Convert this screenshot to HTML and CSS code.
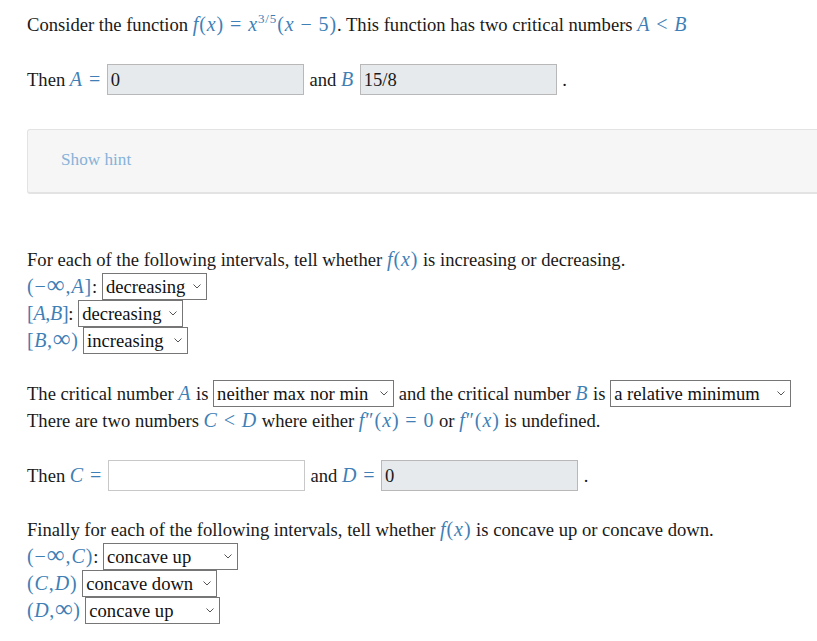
FILE: index.html
```html
<!DOCTYPE html>
<html lang="en">
<head>
    <meta charset="UTF-8">
    <meta name="viewport" content="width=device-width, initial-scale=1.0">
    <title>Critical numbers</title>
    <link rel="stylesheet" href="styles.css">
</head>
<body>
    <div class="question">
        <div class="line">Consider the function <span class="m"><i>f</i>(<i>x</i>) = <i>x</i><sup>3/5</sup>(<i>x</i> − 5)</span>. This function has two critical numbers <span class="m"><i>A</i> &lt; <i>B</i></span></div>

        <div class="answer-row first-row">Then <span class="m"><i>A</i> =</span> <input type="text" class="answer filled" value="0" readonly> and <span class="m"><i>B</i></span> <input type="text" class="answer filled" value="15/8" readonly> .</div>

        <div class="hint"><a href="#" class="hint-link">Show hint</a></div>

        <div class="block intervals">
            <div class="line">For each of the following intervals, tell whether <span class="m"><i>f</i>(<i>x</i>)</span> is increasing or decreasing.</div>
            <div class="line"><span class="m">(−<span class="inf">∞</span>,<i>A</i>]</span>: <select class="w105"><option>decreasing</option></select></div>
            <div class="line"><span class="m tighter">[<i>A</i>,<i>B</i>]</span>: <select class="w105"><option>decreasing</option></select></div>
            <div class="line"><span class="m tight">[<i>B</i>,<span class="inf">∞</span>)</span> <select class="w105"><option>increasing</option></select></div>
        </div>

        <div class="block critical">
            <div class="line">The critical number <span class="m"><i>A</i></span> is <select class="w181"><option>neither max nor min</option></select> and the critical number <span class="m"><i>B</i></span> is <select class="w181"><option>a relative minimum</option></select></div>
            <div class="line">There are two numbers <span class="m"><i>C</i> &lt; <i>D</i></span> where either <span class="m"><i>f</i>″(<i>x</i>) = 0</span> or <span class="m"><i>f</i>″(<i>x</i>)</span> is undefined.</div>
        </div>

        <div class="answer-row">Then <span class="m"><i>C</i> =</span> <input type="text" class="answer" value=""> and <span class="m"><i>D</i> =</span> <input type="text" class="answer filled" value="0" readonly> .</div>

        <div class="block concavity">
            <div class="line">Finally for each of the following intervals, tell whether <span class="m"><i>f</i>(<i>x</i>)</span> is concave up or concave down.</div>
            <div class="line"><span class="m">(−<span class="inf">∞</span>,<i>C</i>)</span>: <select class="w135"><option>concave up</option></select></div>
            <div class="line"><span class="m">(<i>C</i>,<i>D</i>)</span> <select class="w135"><option>concave down</option></select></div>
            <div class="line"><span class="m tight">(<i>D</i>,<span class="inf">∞</span>)</span> <select class="w135"><option>concave up</option></select></div>
        </div>
    </div>
</body>
</html>
```

FILE: styles.css
```css
html, body {
    overflow: hidden;
}
body {
    margin: 0;
    background-color: white;
    color: #1a1a1a;
    font-family: "Liberation Serif", serif;
    font-size: 18.6px;
}
.question {
    padding: 11px 0 0 27px;
}
.line {
    line-height: 27px;
    height: 27px;
    white-space: nowrap;
}
.m {
    color: #3f7fb6;
    font-size: 20px;
    letter-spacing: 0.9px;
}
.m sup {
    font-size: 13px;
    line-height: 0;
}
.tight {
    letter-spacing: 0.6px;
}
.tighter {
    letter-spacing: -0.3px;
}
.inf {
    font-size: 25px;
    line-height: 0;
}
.answer-row {
    height: 31px;
    line-height: 31px;
    white-space: nowrap;
}
.first-row {
    margin-top: 26px;
}
.answer {
    box-sizing: border-box;
    width: 197px;
    height: 31px;
    margin: 0 1px;
    padding: 0 3px;
    vertical-align: top;
    border: 1px solid #c8c8c8;
    font-family: "Liberation Serif", serif;
    font-size: 18.6px;
    color: #1a1a1a;
    background-color: white;
    outline: none;
}
.filled {
    background-color: #e7eaed;
    border-color: #b8b8b8;
}
.hint {
    margin: 34px -20px 0 0;
    padding: 18px 33px;
    height: 65px;
    box-sizing: border-box;
    line-height: 24px;
    background-color: #f6f6f6;
    border: 1px solid #e3e3e3;
    border-bottom-width: 2px;
    border-radius: 3px;
    font-size: 17.2px;
}
.hint-link {
    color: #86b2d8;
    text-decoration: none;
}
.intervals {
    margin-top: 52px;
}
.critical {
    margin-top: 26px;
    margin-bottom: 26px;
}
.concavity {
    margin-top: 25px;
}
select {
    box-sizing: border-box;
    height: 27px;
    vertical-align: top;
    padding: 0 16px 0 3px;
    border: 1px solid #767676;
    border-radius: 0;
    appearance: none;
    background: white url("data:image/svg+xml,%3Csvg xmlns='http://www.w3.org/2000/svg' width='8' height='5'%3E%3Cpath d='M.5.5 4 4 7.5.5' fill='none' stroke='%23555'/%3E%3C/svg%3E") no-repeat right 5px center;
    color: #111;
    font-family: "Liberation Serif", serif;
    font-size: 18.6px;
}
.w105 {
    width: 105px;
}
.w135 {
    width: 135px;
}
.w181 {
    width: 181px;
}
```
